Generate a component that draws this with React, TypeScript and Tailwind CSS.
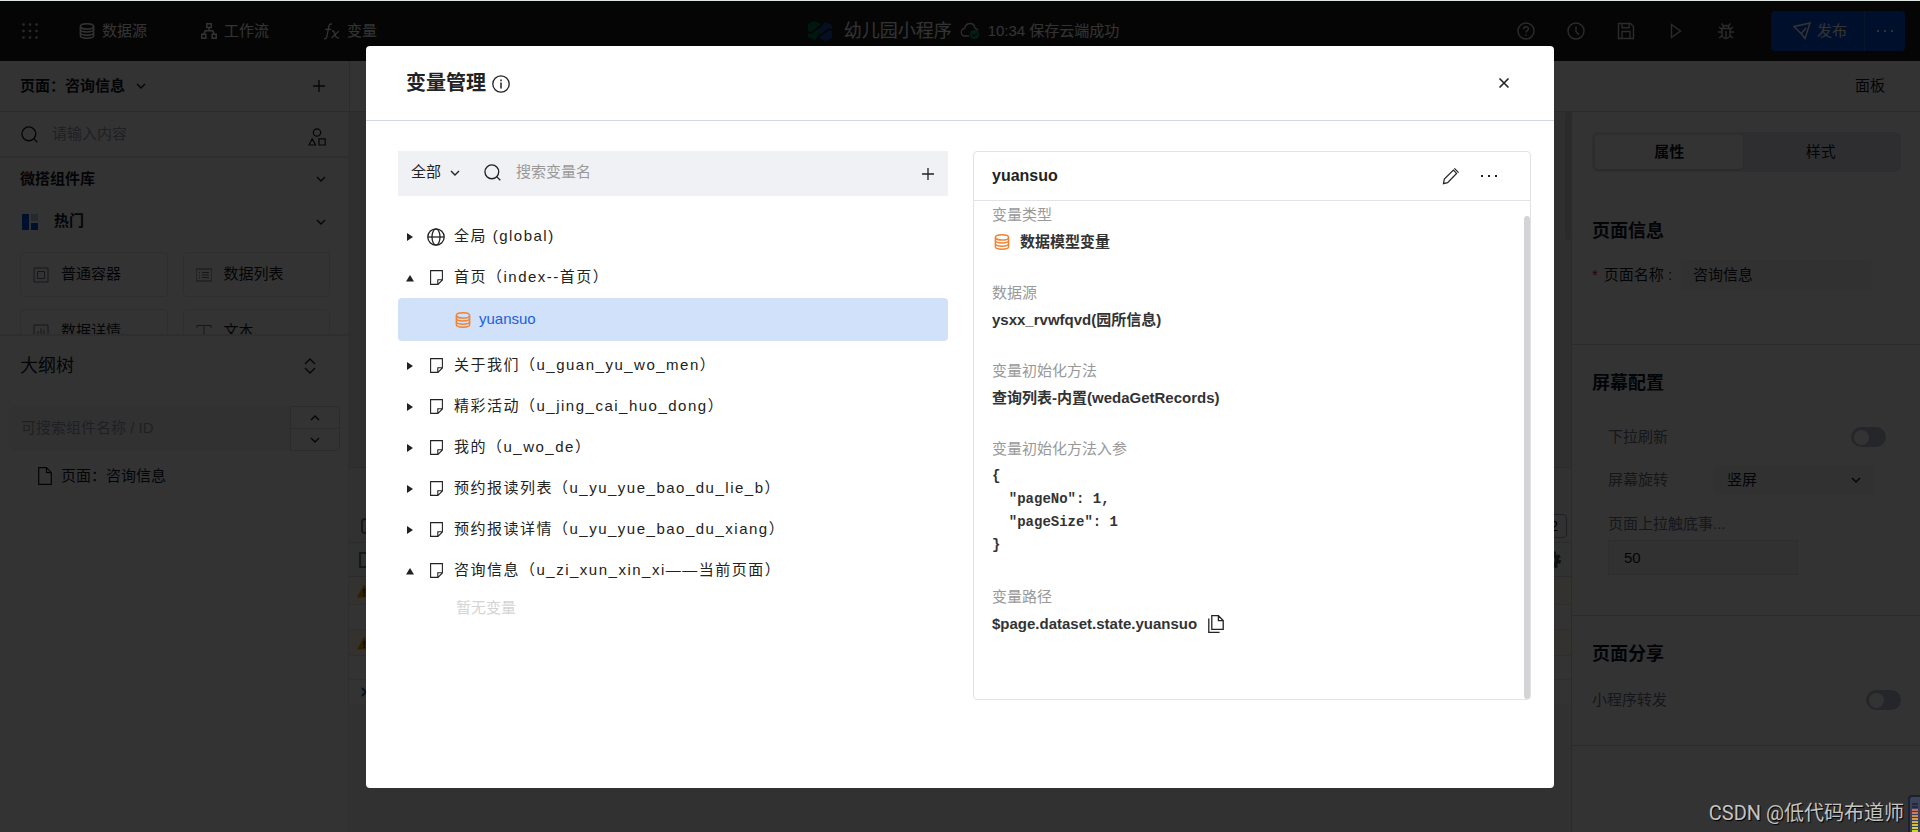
import type { ReactNode } from 'react';
import { useState } from 'react';

const FONT = "font-['Liberation_Sans','Noto_Sans_CJK_SC',sans-serif]";

type IconProps = { className?: string };

const DatabaseIcon = ({ className = '' }: IconProps) => (
    <svg viewBox="0 0 16 16" fill="none" stroke="currentColor" strokeWidth="1.5" className={className}>
        <ellipse cx="8" cy="3.4" rx="6.6" ry="2.6" />
        <path d="M1.4 3.4v9.400c0 1.400 3 2.400 6.600 2.400s6.600-1 6.600-2.400V3.400" />
        <path d="M1.4 6.600C1.400 8 4.400 9 8 9s6.600-1 6.600-2.400M1.400 9.800c0 1.400 3 2.400 6.600 2.400s6.600-1 6.600-2.400" />
    </svg>
);

const FlowIcon = ({ className = '' }: IconProps) => (
    <svg viewBox="0 0 16 16" fill="none" stroke="currentColor" strokeWidth="1.5" className={className}>
        <path d="M5.8.8h4.400v3.800H5.800zM.8 11.200h4v4h-4zM11.200 11.200h4v4h-4zM8 4.600v3.200M2.800 11.200l1.400-3.400h7.600l1.400 3.400" />
    </svg>
);

const FxIcon = ({ className = '' }: IconProps) => (
    <svg viewBox="0 0 18 18" fill="none" stroke="currentColor" strokeWidth="1.4" className={className}>
        <path d="M9.500 1.300C7.600.6 6.600 1.600 6.200 3.600L4 14.600c-.4 1.800-1.400 2.400-3 2M2.400 6.800h6.400" />
        <path d="M9.500 8.600c1.800-.6 2.200.4 3.200 3.600s1.800 4 4.300 3.300M16.800 8.600L9 15.800" />
    </svg>
);

const ChevronIcon = ({ className = '', up = false }: IconProps & { up?: boolean }) => (
    <svg viewBox="0 0 10 10" fill="none" stroke="currentColor" strokeWidth="1.4" className={className}>
        <path d={up ? 'M1 7l4-4 4 4' : 'M1 3l4 4 4-4'} />
    </svg>
);

const PlusIcon = ({ className = '' }: IconProps) => (
    <svg viewBox="0 0 12 12" fill="none" stroke="currentColor" strokeWidth="1.3" className={className}>
        <path d="M6 0v12M0 6h12" />
    </svg>
);

const SearchIcon = ({ className = '' }: IconProps) => (
    <svg viewBox="0 0 18 18" fill="none" stroke="currentColor" strokeWidth="1.4" className={className}>
        <circle cx="8.3" cy="8.3" r="7.3" />
        <path d="M13.400 13.400l3.900 3.900" />
    </svg>
);

const ShapesIcon = ({ className = '' }: IconProps) => (
    <svg viewBox="0 0 18 18" fill="none" stroke="currentColor" strokeWidth="1.2" className={className}>
        <circle cx="9" cy="4.5" r="3.7" />
        <path d="M4.200 10.800L.9 17h6.600zM11 10.800h6.200V17H11z" />
    </svg>
);

const NoteIcon = ({ className = '' }: IconProps) => (
    <svg viewBox="0 0 13 15" fill="none" stroke="currentColor" strokeWidth="1.1" className={className}>
        <path d="M.6.6h11.800v9.400l-4.400 4.400H.6zM12.400 9.800H7.800v4.600" />
    </svg>
);

const GlobeIcon = ({ className = '' }: IconProps) => (
    <svg viewBox="0 0 18 18" fill="none" stroke="currentColor" strokeWidth="1.3" className={className}>
        <circle cx="9" cy="9" r="8.2" />
        <ellipse cx="9" cy="9" rx="4" ry="8.2" />
        <path d="M.8 9h16.400" />
    </svg>
);

const FileIcon = ({ className = '' }: IconProps) => (
    <svg viewBox="0 0 14 18" fill="none" stroke="currentColor" strokeWidth="1.2" className={className}>
        <path d="M.7.7h7.800l4.800 5v11.600H.7zM8.500.7v5h4.800" />
    </svg>
);

const InfoIcon = ({ className = '' }: IconProps) => (
    <svg viewBox="0 0 18 18" fill="none" stroke="currentColor" strokeWidth="1.3" className={className}>
        <circle cx="9" cy="9" r="8.2" />
        <path d="M9 7.600v6M9 4.600v1.600" strokeWidth="1.5" />
    </svg>
);

const PencilIcon = ({ className = '' }: IconProps) => (
    <svg viewBox="0 0 18 18" fill="none" stroke="currentColor" strokeWidth="1.2" className={className}>
        <path d="M1.500 16.700l.8-4.600L11.400 3l3.200 3.400-9 9.300zM12.400 1.300l4.200 4.400" />
    </svg>
);

const CopyIcon = ({ className = '' }: IconProps) => (
    <svg viewBox="0 0 16 18" fill="none" stroke="currentColor" strokeWidth="1.3" className={className}>
        <path d="M3.800.7h6.600l4.800 4.900v8.700H3.800zM10.400.7v4.900h4.800M.8 3.400v13.900h10.800" />
    </svg>
);

const DotsIcon = ({ className = '' }: IconProps) => (
    <svg viewBox="0 0 16 4" fill="currentColor" className={className}>
        <path d="M0 1h2v2H0zM7 1h2v2H7zM14 1h2v2h-2z" />
    </svg>
);

const GridIcon = ({ className = '' }: IconProps) => (
    <svg viewBox="0 0 16 16" fill="currentColor" className={className}>
        {[1.5, 8, 14.5].map(y => [1.5, 8, 14.5].map(x => <circle key={`${x}-${y}`} cx={x} cy={y} r="1.3" />))}
    </svg>
);

const WarnIcon = ({ className = '' }: IconProps) => (
    <svg viewBox="0 0 14 14" className={className}>
        <path d="M7 .5L14 13.500H0z" fill="#e8a200" />
        <path d="M7 5v4.500M7 10.500v1.500" stroke="#333" strokeWidth="1.4" />
    </svg>
);

const TopLink = ({ icon, label }: { icon: ReactNode; label: string }) => (
    <a href="#" className="flex items-center gap-[7px] text-[15px] text-white">
        {icon}
        {label}
    </a>
);

const headerIcons = [
    {
        name: '帮助',
        body: <><circle cx="9" cy="9" r="8" /><path d="M6.600 7.200c0-1.500 1-2.400 2.400-2.400s2.400.9 2.400 2.100c0 1.700-2.400 1.800-2.400 3.700M9 12.200v1.500" /></>,
    },
    { name: '历史', body: <><circle cx="9" cy="9" r="8" /><path d="M9 4.500V9.500l3 3.200" /></> },
    { name: '保存', body: <path d="M1.500 1.500h12l3 3v12h-15zM5 1.500v4.200h7V1.500M5 16.500v-7h8v7" /> },
    { name: '预览', body: <path d="M4.500 2.500l9 6.500-9 6.500z" /> },
    {
        name: '调试',
        body: <path d="M5 6.500h8v6a4 4 0 0 1-8 0zM6 6.500a3 3 0 0 1 6 0M9 9v7.500M4.500 1.500l2 2.500M13.500 1.500l-2 2.500M1 10h4M13 10h4M2 5l3 2.500M16 5l-3 2.500M2 16l3.200-2.500M16 16l-3.200-2.500" />,
    },
];

function TopBar() {
    return (
        <header className="flex h-[61px] items-center justify-between border-t border-[#dfe6e2] bg-[#1a1a1a] pl-[22px] pr-[15px] text-white">
            <nav className="flex flex-1 items-center">
                <button aria-label="应用" className="mr-[41px]"><GridIcon className="size-4 text-gray-300" /></button>
                <div className="flex items-center gap-[54px]">
                    <TopLink icon={<DatabaseIcon className="size-4" />} label="数据源" />
                    <TopLink icon={<FlowIcon className="size-4" />} label="工作流" />
                    <TopLink icon={<FxIcon className="size-[17px]" />} label="变量" />
                </div>
            </nav>
            <div className="flex items-center gap-2">
                <svg viewBox="0 0 24 20" className="mr-1 h-5 w-6">
                    <path d="M0 3l6-3 7 3L3 11l-3-1zM0 12l3 1 9-6v5l-5 7-7-3z" fill="#04734a" />
                    <path d="M24 17l-6 3-7-3 10-8 3 1zM24 8l-3-1-9 6V8l5-7 7 3z" fill="#1d4da8" />
                </svg>
                <span className="text-lg">幼儿园小程序</span>
                <svg viewBox="0 0 20 18" className="h-[18px] w-5">
                    <path d="M9 14H4.500a3.800 3.800 0 0 1 0-7.500C5.500 3 7.500 1.500 10 1.500s4.600 1.700 5 4.700c1.500.3 2.400 1 3 2.300" fill="none" stroke="#ddd" strokeWidth="1.3" />
                    <circle cx="14.5" cy="12.5" r="4.5" fill="#0a9a55" />
                    <path d="M12.300 12.500l1.700 1.700 2.800-3" fill="none" stroke="#111" strokeWidth="1.2" />
                </svg>
                <span className="text-[15px]">10:34 保存云端成功</span>
            </div>
            <div className="flex flex-1 items-center justify-end">
                <div className="mr-9 flex items-center gap-8">
                    {headerIcons.map(({ name, body }) => (
                        <button key={name} aria-label={name}>
                            <svg viewBox="0 0 18 18" fill="none" stroke="currentColor" strokeWidth="1.4" className="size-[18px] text-gray-300">
                                {body}
                            </svg>
                        </button>
                    ))}
                </div>
                <div className="flex h-10 overflow-hidden rounded bg-[#0052d9]">
                    <button className="flex items-center gap-1.5 border-r border-[#2a6be0] pl-[22px] pr-[17px] text-[15px]">
                        <svg viewBox="0 0 18 18" fill="none" stroke="currentColor" strokeWidth="1.4" className="size-[18px]">
                            <path d="M1 4.500L17 1l-5 15.500-3.800-4.700zM8.200 11.800L13 6" />
                        </svg>
                        发布
                    </button>
                    <button aria-label="更多" className="px-3"><DotsIcon className="h-1 w-4" /></button>
                </div>
            </div>
        </header>
    );
}

const componentCards = [
    { label: '普通容器', body: <path d="M1 1h14v14H1zM4.500 4.500h7v7h-7z" /> },
    { label: '数据列表', body: <path d="M0 2h16v12H0zM3 5.500h1M6 5.500h7M3 8h1M6 8h7M3 10.500h1M6 10.500h7" /> },
    { label: '数据详情', body: <path d="M1 1h14v14H1zM5 13V7M8 13V4.500M11 13V6" /> },
    { label: '文本', body: <path d="M1 4V1.500h14V4M8 1.500V15" /> },
];

function LeftPanel() {
    return (
        <aside className="flex w-[348px] shrink-0 flex-col bg-white text-[15px] text-gray-900">
            <div className="flex h-[46px] items-center border-b-2 border-gray-200 pl-[21px] pr-[22px]">
                <SearchIcon className="size-[17px]" />
                <input aria-label="搜索组件" placeholder="请输入内容" className="ml-3.5 min-w-0 flex-1 outline-none placeholder:text-gray-400" />
                <button aria-label="组件分类" className="mt-1.5"><ShapesIcon className="size-[18px]" /></button>
            </div>
            <div className="h-44 overflow-hidden pl-5 pr-[18px]">
                <button className="flex h-[42px] w-full items-center justify-between pr-1 font-bold">
                    微搭组件库
                    <ChevronIcon className="size-[10px]" />
                </button>
                <button className="flex h-[43px] w-full items-center pr-1 font-bold">
                    <svg viewBox="0 0 16 16" className="ml-0.5 mr-4 size-4">
                        <path d="M0 0h7v16H0zM9 9h7v7H9z" fill="#0052d9" />
                        <path d="M9 0h7v7H9z" fill="#b5c7e8" />
                    </svg>
                    热门
                    <ChevronIcon className="ml-auto size-[10px]" />
                </button>
                <ul className="mt-[9px] grid grid-cols-2 gap-x-[15px] gap-y-3">
                    {componentCards.map(({ label, body }) => (
                        <li key={label} className="flex h-[45px] items-center gap-3 rounded border border-gray-200 pl-3">
                            <svg viewBox="0 0 16 16" fill="none" stroke="currentColor" className="size-4 text-gray-500">{body}</svg>
                            {label}
                        </li>
                    ))}
                </ul>
            </div>
            <div className="border-t-2 border-gray-200">
                <div className="flex h-[59px] items-center justify-between pl-5 pr-8">
                    <h2 className="text-lg">大纲树</h2>
                    <button aria-label="展开">
                        <svg viewBox="0 0 12 16" fill="none" stroke="currentColor" strokeWidth="1.3" className="h-4 w-3">
                            <path d="M1 6l5-5 5 5M1 10l5 5 5-5" />
                        </svg>
                    </button>
                </div>
                <div className="ml-2.5 mr-2 mt-[11px] flex h-[45px]">
                    <input aria-label="搜索大纲" placeholder="可搜索组件名称 / ID" className="min-w-0 flex-1 rounded-l bg-gray-100 pl-[11px] outline-none placeholder:text-gray-400" />
                    <div className="flex w-[50px] flex-col divide-y divide-gray-300 rounded-r border border-gray-300">
                        <button aria-label="上一个" className="flex flex-1 items-center justify-center"><ChevronIcon up className="size-[10px]" /></button>
                        <button aria-label="下一个" className="flex flex-1 items-center justify-center"><ChevronIcon className="size-[10px]" /></button>
                    </div>
                </div>
                <div className="flex h-[50px] items-center gap-[9px] pl-[38px]">
                    <FileIcon className="h-[18px] w-3.5" />
                    页面：咨询信息
                </div>
            </div>
        </aside>
    );
}

// Editor canvas with the debug drawer below it, mostly hidden by the dialog
function Canvas() {
    return (
        <main className="flex min-w-0 flex-1 flex-col border-l border-gray-200 bg-white">
            <div className="flex h-[355px] justify-end bg-[#e8e8e8]">
                <div className="h-32 w-1.5 rounded-full bg-[#cfcfcf]" />
            </div>
            <div className="flex h-[76px] items-end justify-between border-y border-gray-300 bg-[#f3f6f6] pb-1 pl-3 pr-1">
                <span className="mb-1 h-4 w-3 rounded-sm border-2 border-gray-500" />
                <span className="flex h-6 w-8 items-center justify-end rounded-sm border border-gray-400 pr-2 text-sm">2</span>
            </div>
            <div className="flex h-[34px] items-center justify-between border-b border-gray-300 bg-[#eef2f4] px-2.5">
                <span className="h-4 w-3 border-2 border-gray-500" />
                <svg viewBox="0 0 18 18" className="size-[18px]">
                    <circle cx="9" cy="9" r="5" fill="none" stroke="#555" strokeWidth="4" />
                    <circle cx="9" cy="9" r="7.5" fill="none" stroke="#555" strokeWidth="3" strokeDasharray="3.5 2.4" />
                </svg>
            </div>
            <div className="flex h-7 items-center border-b border-[#f0e6c8] bg-[#fffbe6] pl-2"><WarnIcon className="size-3.5" /></div>
            <div className="h-6" />
            <div className="flex h-[27px] items-center border-y border-[#f0e6c8] bg-[#fffbe6] pl-2"><WarnIcon className="size-3.5" /></div>
            <div className="h-6 border-b border-gray-200" />
            <div className="flex h-6 items-center pl-3 text-[#2457c5]">
                <svg viewBox="0 0 10 10" fill="none" stroke="currentColor" strokeWidth="2" className="size-2.5"><path d="M1 1l4 4-4 4" /></svg>
            </div>
            <div className="flex-1 bg-[#f4f4f4]" />
        </main>
    );
}

const Toggle = ({ id }: { id: string }) => (
    <input
        id={id}
        type="checkbox"
        role="switch"
        className="flex h-5 w-[35px] shrink-0 appearance-none items-center rounded-full bg-[#b9bfca] px-[3px] before:size-[15px] before:rounded-full before:bg-white checked:justify-end checked:bg-[#0052d9]"
    />
);

function RightPanel() {
    return (
        <aside className="w-[349px] shrink-0 border-l border-gray-300 bg-white text-[15px] text-gray-900">
            <div className="ml-5 mr-[19px] mt-5 flex h-10 rounded-md bg-[#e3e7ed] p-[3px]">
                <button className="w-[49%] rounded bg-white font-bold shadow">属性</button>
                <button className="flex-1">样式</button>
            </div>
            <section className="border-b border-gray-300 pb-[54px] pl-5 pt-[45px]">
                <h2 className="text-lg font-bold leading-7">页面信息</h2>
                <div className="mt-[15px] flex h-[30px] items-center">
                    <label htmlFor="page-name" className="w-[89px]"><span className="mr-1.5 text-red-600">*</span>页面名称 :</label>
                    <input id="page-name" defaultValue="咨询信息" className="h-full w-[190px] bg-gray-100 pb-1 pl-3 outline-none" />
                </div>
            </section>
            <section className="border-b border-gray-300 pb-10 pl-9 pt-6 text-gray-500">
                <h2 className="-ml-4 text-lg font-bold leading-7 text-gray-900">屏幕配置</h2>
                <div className="mr-[34px] mt-[30px] flex h-5 items-center justify-between">
                    <label htmlFor="pull-refresh">下拉刷新</label>
                    <Toggle id="pull-refresh" />
                </div>
                <div className="mt-[18px] flex h-[30px] items-center">
                    <label htmlFor="rotate" className="w-[106px]">屏幕旋转</label>
                    <div className="grid h-full w-[159px] items-center">
                        <select id="rotate" className="col-start-1 row-start-1 h-full w-full appearance-none bg-gray-100 pl-[13px] text-gray-900">
                            <option>竖屏</option>
                        </select>
                        <ChevronIcon className="pointer-events-none col-start-1 row-start-1 mr-3 size-[10px] justify-self-end text-gray-900" />
                    </div>
                </div>
                <label htmlFor="reach-bottom" className="mt-[17px] block leading-6">页面上拉触底事...</label>
                <input id="reach-bottom" defaultValue="50" className="mt-1 block h-[35px] w-[190px] border border-gray-200 bg-gray-100 pl-[15px] text-gray-900 outline-none" />
            </section>
            <section className="border-b border-gray-300 pb-[35px] pl-5 pt-6">
                <h2 className="text-lg font-bold leading-7">页面分享</h2>
                <div className="mr-[19px] mt-[22px] flex h-5 items-center justify-between text-gray-500">
                    <label htmlFor="share">小程序转发</label>
                    <Toggle id="share" />
                </div>
            </section>
        </aside>
    );
}

const pagesAfter = [
    { label: '关于我们（u_guan_yu_wo_men）' },
    { label: '精彩活动（u_jing_cai_huo_dong）' },
    { label: '我的（u_wo_de）' },
    { label: '预约报读列表（u_yu_yue_bao_du_lie_b）' },
    { label: '预约报读详情（u_yu_yue_bao_du_xiang）' },
    { label: '咨询信息（u_zi_xun_xin_xi——当前页面）', open: true },
];

function TreeRow({ label, open = false, global = false }: { label: string; open?: boolean; global?: boolean }) {
    return (
        <button aria-expanded={open} className="flex h-[41px] w-full items-center pl-2 text-left text-[15px] tracking-widest text-[#222]">
            <svg viewBox="0 0 8 8" fill="currentColor" className="mr-[13px] size-2">
                <path d={open ? 'M0 7.500L4 1l4 6.500z' : 'M1 0l6 4-6 4z'} />
            </svg>
            <span className="mr-[9px] flex w-[18px] justify-center">
                {global ? <GlobeIcon className="size-[18px]" /> : <NoteIcon className="h-[15px] w-[13px]" />}
            </span>
            {label}
        </button>
    );
}

const Field = ({ label, children }: { label: string; children: ReactNode }) => (
    <div className="mb-[29px]">
        <dt className="mb-[5px] leading-[22px] text-[#999]">{label}</dt>
        <dd className="flex min-h-[22px] items-center font-bold leading-[22px] text-[#333]">{children}</dd>
    </div>
);

function VariableDialog({ onClose }: { onClose: () => void }) {
    const [keyword, setKeyword] = useState('');

    return (
        <section role="dialog" aria-label="变量管理" className="mt-[45px] w-full max-w-[1188px] self-start rounded bg-white text-[15px] text-[#222]">
            <div className="flex h-[75px] items-center justify-between border-b border-[#d3d8e3] pl-10 pr-11">
                <h1 className="flex items-center gap-1.5 text-xl font-bold">
                    变量管理
                    <InfoIcon className="mt-0.5 size-[18px]" />
                </h1>
                <button aria-label="关闭" onClick={onClose}>
                    <svg viewBox="0 0 12 12" fill="none" stroke="currentColor" strokeWidth="1.6" className="size-3">
                        <path d="M1.500 1.500l9 9M10.500 1.500l-9 9" />
                    </svg>
                </button>
            </div>

            <div className="flex gap-[25px] pb-[88px] pl-8 pr-[23px] pt-[30px]">
                <div className="w-[550px] shrink-0">
                    <div className="flex h-[45px] items-center bg-[#f0f1f5] pb-0.5 pl-[13px] pr-[14px]">
                        <div className="grid w-[49px] items-center">
                            <select aria-label="范围" className="col-start-1 row-start-1 w-full appearance-none">
                                <option>全部</option>
                            </select>
                            <ChevronIcon className="pointer-events-none col-start-1 row-start-1 size-[10px] justify-self-end" />
                        </div>
                        <SearchIcon className="ml-6 size-[17px]" />
                        <input
                            aria-label="搜索变量名"
                            value={keyword}
                            onChange={e => setKeyword(e.target.value)}
                            placeholder="搜索变量名"
                            className="ml-[15px] min-w-0 flex-1 outline-none placeholder:text-[#999]"
                        />
                        <button aria-label="新建变量" className="mt-0.5"><PlusIcon className="size-3" /></button>
                    </div>
                    <div className="mt-5">
                        <TreeRow label="全局 (global)" global />
                        <TreeRow label="首页（index--首页）" open />
                        <button className="mb-1 flex h-[43px] w-full items-center gap-2 rounded bg-[#d2e1fa] pl-[57px] text-[#1a5fe0]">
                            <DatabaseIcon className="size-4 text-[#f08437]" />
                            yuansuo
                        </button>
                        {pagesAfter.map(page => <TreeRow key={page.label} {...page} />)}
                        <p className="pl-[58px] leading-[34px] text-[#d4d4d4]">暂无变量</p>
                    </div>
                </div>

                <div className="flex min-h-[549px] min-w-0 flex-1 flex-col rounded border border-[#e1e3e9]">
                    <div className="flex h-[49px] items-center border-b border-[#e1e3e9] pl-[18px] pr-[33px]">
                        <h2 className="flex-1 text-base font-bold">yuansuo</h2>
                        <button aria-label="编辑" className="mr-[21px]"><PencilIcon className="size-[18px]" /></button>
                        <button aria-label="更多"><DotsIcon className="h-1 w-4" /></button>
                    </div>
                    <div className="flex flex-1">
                        <dl className="min-w-0 flex-1 pl-[18px] pt-[3px]">
                            <Field label="变量类型">
                                <DatabaseIcon className="ml-0.5 mr-[10px] size-4 text-[#f08437]" />
                                数据模型变量
                            </Field>
                            <Field label="数据源">ysxx_rvwfqvd(园所信息)</Field>
                            <Field label="变量初始化方法">查询列表-内置(wedaGetRecords)</Field>
                            <Field label="变量初始化方法入参">
                                <pre className="font-['Liberation_Mono',monospace] text-sm leading-[23px]">{'{\n  "pageNo": 1,\n  "pageSize": 1\n}'}</pre>
                            </Field>
                            <Field label="变量路径">
                                $page.dataset.state.yuansuo
                                <button aria-label="复制" className="ml-[11px] text-[#222]"><CopyIcon className="h-[18px] w-4" /></button>
                            </Field>
                        </dl>
                        <div className="mt-[15px] w-1.5 rounded-full bg-[#d4d4d4]" />
                    </div>
                </div>
            </div>
        </section>
    );
}

const meterBars = [
    'bg-[#232a3d]', 'bg-[#232a3d]', 'bg-[#d0675a]', 'bg-[#d0785a]', 'bg-[#d08a50]',
    'bg-[#d0a048]', 'bg-[#d0b040]', 'bg-[#d0c038]', 'bg-[#d8d030]', 'bg-[#c8d830]',
];

export default function App() {
    const [open, setOpen] = useState(true);

    return (
        <div className={`${FONT} relative flex min-h-screen flex-col overflow-hidden bg-white`}>
            <TopBar />
            <div className="flex h-[51px] items-stretch border-b border-gray-300 bg-white text-[15px] text-gray-900">
                <div className="flex w-[350px] items-center border-r border-gray-300 pl-5 pr-6">
                    <button className="flex items-center gap-[11px] font-bold">
                        页面：咨询信息
                        <ChevronIcon className="size-[10px]" />
                    </button>
                    <button aria-label="新建页面" className="ml-auto"><PlusIcon className="size-3" /></button>
                </div>
                <button className="ml-auto mr-[35px]">面板</button>
            </div>
            <div className="flex flex-1">
                <LeftPanel />
                <Canvas />
                <RightPanel />
            </div>

            {open && (
                <div className="absolute inset-x-0 bottom-0 top-px flex justify-center bg-black/80">
                    <VariableDialog onClose={() => setOpen(false)} />
                </div>
            )}

            <div className="absolute bottom-0 right-0 flex items-end gap-1">
                <span className="pb-[5px] font-['Roboto','Noto_Sans_CJK_SC',sans-serif] text-xl leading-7 text-[#c4c4c4] [text-shadow:1px_1px_1px_#000]">
                    CSDN @低代码布道师
                </span>
                <div className="flex h-[37px] w-3 flex-col justify-end gap-px overflow-hidden rounded-tl border-l-2 border-t-2 border-[#1c2030] bg-[#3c4258] pl-0.5">
                    {meterBars.map((color, i) => <span key={i} className={`h-0.5 w-1.5 ${color}`} />)}
                </div>
            </div>
        </div>
    );
}
